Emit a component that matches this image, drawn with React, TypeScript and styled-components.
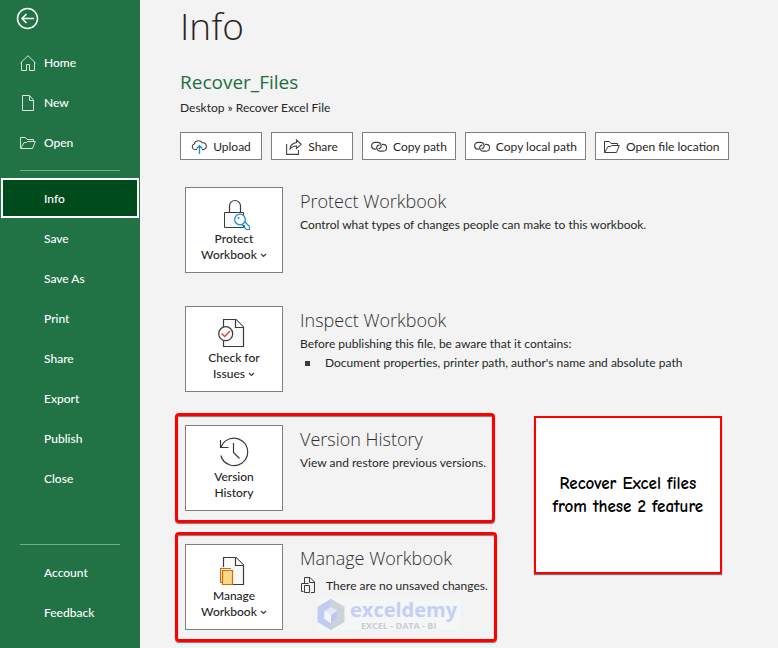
import React from "react";
import styled, { createGlobalStyle, css } from "styled-components";

const Global = createGlobalStyle`
  *, *::before, *::after { box-sizing: border-box; }
  body {
    margin: 0;
    background: #f3f3f3;
    color: #262626;
    font-family: "Segoe UI", Lato, "Noto Sans", sans-serif;
    font-size: 12px;
    line-height: 16px;
  }
  h1, h2, h3, p, ul { margin: 0; padding: 0; font-weight: 400; }
  button { font: inherit; color: inherit; cursor: pointer; }
  svg { display: block; flex: none; fill: none; }
`;

const Page = styled.div`
  display: flex;
  min-height: 100vh;
`;

const Sidebar = styled.nav`
  display: flex;
  flex-direction: column;
  flex: 0 0 140px;
  padding-bottom: 16px;
  background: #217346;
  color: #fff;
`;

const BackButton = styled.button`
  display: block;
  align-self: flex-start;
  margin: 7px 0 12px 16px;
  padding: 0;
  border: 0;
  background: none;
`;

const NavItem = styled.a<{ $active?: boolean }>`
  display: flex;
  align-items: center;
  height: 40px;
  margin: 0 1px;
  padding: 1px 0 0 19px;
  color: #fff;
  font-weight: 500;
  text-decoration: none;
  ${(p) =>
    p.$active &&
    css`
      padding-left: 17px;
      border: 2px solid #fff;
      background: #004b1c;
    `}
`;

const NavIcon = styled.span`
  width: 24px;
`;

const Divider = styled.hr`
  width: 100px;
  height: 1px;
  margin: 8px 20px 7px;
  border: 0;
  background: #6fae8a;
`;

const Spacer = styled.div`
  flex: 1;
`;

const Main = styled.main`
  flex: 1;
  min-width: 0;
  padding: 0 40px 0 35px;
`;

const Header = styled.header`
  padding-left: 5px;
  margin-bottom: 15px;
`;

const Title = styled.h1`
  padding-top: 2px;
  font-family: "Segoe UI Light", "Open Sans", sans-serif;
  font-size: 37px;
  font-weight: 300;
  line-height: 48px;
`;

const FileName = styled.h2`
  margin-top: 19px;
  color: #1e6e42;
  font-family: "Segoe UI", "Open Sans", sans-serif;
  font-size: 19px;
  line-height: 26px;
`;

const FilePath = styled.p`
  margin-top: 5px;
`;

const Toolbar = styled.div`
  display: flex;
  flex-wrap: wrap;
  gap: 9px;
  margin-top: 16px;
`;

const ToolButton = styled.button`
  display: flex;
  align-items: center;
  justify-content: center;
  gap: 6px;
  min-width: 82px;
  height: 28px;
  padding: 1px 8px 0;
  border: 1px solid #7f7f7f;
  background: #fff;
  white-space: nowrap;
`;

const Sections = styled.div`
  display: flex;
  flex-direction: column;
  align-items: flex-start;
  gap: 9px;
`;

const Section = styled.section<{ $marked?: boolean }>`
  display: flex;
  gap: 17px;
  padding: 9px 6px 9px 7px;
  border: 3px solid ${(p) => (p.$marked ? "#fe0000" : "transparent")};
  border-radius: 4px;
  box-shadow: ${(p) => (p.$marked ? "0 1px 1px #777, inset 0 1px 1px #777" : "none")};
`;

const Tile = styled.button`
  display: flex;
  flex: none;
  flex-direction: column;
  align-items: center;
  width: 98px;
  height: 86px;
  padding: 10px 0 0;
  border: 1px solid #7f7f7f;
  background: #fff;
  font-weight: 500;
`;

const TileLabel = styled.span`
  display: flex;
  align-items: center;
  gap: 3px;
`;

const TileIcon = styled.span`
  height: 33px;
`;

const SectionTitle = styled.h3`
  color: #303030;
  font-family: "Segoe UI Light", "Open Sans", sans-serif;
  font-size: 18px;
  font-weight: 300;
  line-height: 28px;
`;

const SectionText = styled.p`
  margin-top: 2px;
`;

const Findings = styled.ul`
  margin-top: 3px;
  list-style: none;
`;

const Finding = styled.li`
  display: flex;
  align-items: center;
  gap: 15px;
  padding-left: 5px;
  &::before {
    content: "";
    width: 5px;
    height: 5px;
    background: #3b3b3b;
  }
`;

const Unsaved = styled.p`
  display: flex;
  align-items: center;
  gap: 10px;
  margin-top: 5px;
  padding-left: 1px;
`;

const Split = styled.div`
  display: flex;
  align-items: flex-start;
  gap: 37px;
  margin-top: 9px;
`;

const Callout = styled.aside`
  display: flex;
  align-items: center;
  justify-content: center;
  flex: 0 1 188px;
  height: 158px;
  margin-top: 3px;
  border: 2px solid #fe0000;
  box-shadow: 0 1px 1px #777;
  background: #fff;
  color: #000;
  font-family: "Comic Sans MS", "Comic Neue", cursive;
  font-size: 17px;
  font-weight: 700;
  line-height: 23px;
  text-align: center;
  white-space: nowrap;
`;

const Brand = styled.div`
  display: flex;
  align-items: center;
  gap: 5px;
  width: 143px;
  height: 31px;
  margin: 5px 0 0 17px;
  background: #f5f6f6;
`;

const BrandText = styled.div`
  color: #c3cff5;
  font-family: "Open Sans", sans-serif;
  font-size: 20px;
  font-weight: 700;
  line-height: 22px;
`;

const BrandTag = styled.small`
  display: block;
  padding-left: 11px;
  color: #c9ccd2;
  font-size: 9px;
  line-height: 9px;
`;

const BackIcon = () => (
  <svg width="23" height="23" stroke="#fff" strokeWidth="1.5">
    <circle cx="11.5" cy="11.5" r="10" />
    <path d="M6 11.500H18M10.500 7L6 11.500L10.500 16" />
  </svg>
);

const HomeIcon = () => (
  <svg width="16" height="16" stroke="#d5e6dc">
    <path d="M.5 8L8 .7L15.500 8M1.500 7V15.500H6.500V9.500H9.500V15.500H14.500V7" />
  </svg>
);

const NewIcon = () => (
  <svg width="16" height="16" stroke="#d5e6dc">
    <path d="M2.500.500H9.500L13.500 5V15.500H2.500ZM9.500.500V5.500H13.500" />
  </svg>
);

const FolderIcon = ({ color = "#3b3b3b" }: { color?: string }) => (
  <svg width="16" height="12" stroke={color}>
    <path d="M.5 11.500V.500H5.500L7 2.500H13.500V4.500M.7 11.500L4 5.500H6.500L7.500 4.500H15.300L12.500 11.500Z" />
  </svg>
);

const UploadIcon = () => (
  <svg width="16" height="14" stroke="#444" strokeWidth="1.1">
    <path d="M6 9.500H3.500A2.800 2.800 0 0 1 3.200 4.100A4.400 4.400 0 0 1 11.200 2.800A3.400 3.400 0 0 1 12.500 9.500H11" />
    <path d="M8.500 14V6M5.700 8.500L8.500 5.700L11.300 8.500" stroke="#1e8bcd" strokeWidth="1.3" />
  </svg>
);

const ShareIcon = () => (
  <svg width="16" height="16" stroke="#444" strokeWidth="1.1">
    <path d="M.6 5V15.400H12.500V11" />
    <path d="M10.500 1L15.200 5.300L10.500 9.500V7C7.500 7 5.500 8 3.800 10.500C4.200 6.500 6.500 4 10.500 3.600Z" />
  </svg>
);

const LinkIcon = () => (
  <svg width="16" height="12" stroke="#444" strokeWidth="1.2">
    <path d="M5 8.200H4A3.400 3.400 0 0 1 4 1.400H7A3.300 3.300 0 0 1 9.600 6.600Q8.800 7.700 7.500 7.600" />
    <path d="M11 3.300H12.200A3.400 3.400 0 0 1 12.200 10.100H8.800A3.200 3.200 0 0 1 6.300 5Q7.200 3.900 8.500 4.100" />
  </svg>
);

const LockIcon = () => (
  <svg width="32" height="32" stroke="#3b3b3b">
    <path d="M11.500 14.500V8A5.500 5.500 0 0 1 22.500 8V14.500" strokeWidth="1.2" />
    <path d="M6.500 14.500H25.500V29.500H6.500Z" fill="#fafafa" />
    <path d="M22 25.500H24.500V27.500H26.500V29.500L28.500 31.500H31.500V28.500L26.500 23.500" stroke="#1e8bcd" fill="#fff" strokeWidth="1.2" />
    <circle cx="22" cy="21.500" r="5.300" stroke="#1e8bcd" fill="#fff" strokeWidth="1.300" />
    <circle cx="20.500" cy="20" r="1" fill="#1e8bcd" stroke="none" />
  </svg>
);

const CheckIcon = () => (
  <svg width="32" height="32" stroke="#3b3b3b" strokeWidth="1.200">
    <path d="M5.500 2.500H18L25.500 10V29.500H5.500Z" fill="#fafafa" />
    <path d="M17.500 2.500V10.500H25.500" fill="#fff" />
    <circle cx="7.700" cy="16.700" r="7" fill="#fff" />
    <path d="M3.500 16.500L6.700 19.500L12 14" stroke="#ee3b33" strokeWidth="1.400" />
  </svg>
);

const HistoryIcon = () => (
  <svg width="30" height="32" stroke="#3b3b3b" strokeWidth="1.200">
    <path d="M1.800 19.500A13.700 13.700 0 1 0 2 11.500" />
    <path d="M1.500 4V11.500H9.500M14.500 7V16.500L20.500 22.500" />
  </svg>
);

const ManageIcon = () => (
  <svg width="28" height="32" stroke="#3b3b3b" strokeWidth="1.200">
    <path d="M3.500 2.500H16L23.500 10V29.500H3.500Z" fill="#fafafa" />
    <path d="M15.500 2.500V10.500H23.500" fill="#fff" />
    <path d="M0 12H12V31H0Z" fill="#fff" stroke="none" />
    <path d="M2.500 27.500H.600V13.500H11" stroke="#d86b00" />
    <path d="M2.500 15.500H12.500V29.500H2.500Z" fill="#f9d98c" stroke="#d86b00" />
  </svg>
);

const CopiesIcon = () => (
  <svg width="15" height="17" stroke="#3b3b3b">
    <path d="M3.500 6V.500H9L13.500 5V15.500H10M8.500.500V5.500H13.500M2.500 14.500H.500V6.500H7.500M3.500 8.500H8.500V15.500H3.500Z" />
  </svg>
);

const Chevron = () => (
  <svg width="7" height="5" stroke="#3b3b3b" strokeWidth="1.200">
    <path d="M1 1L3.500 3.500L6 1" />
  </svg>
);

const BrandMark = () => (
  <svg width="28" height="31" viewBox="0 0 28 31">
    <path d="M14 0L27.500 8L14 16L.5 8Z" fill="#d0d6e6" />
    <path d="M14 0L.5 8V23L14 31V24L7.500 20V12L14 8Z" fill="#c0ccf2" />
    <path d="M14 8L20.500 12V20L14 24V31L27.500 23V8L14 0Z" fill="#cdd1d9" />
    <path d="M14 8L20.500 12L14 16L7.500 12Z" fill="#e3e8f5" />
    <path d="M7.500 12L14 16V24L7.500 20Z" fill="#f4f5f8" />
    <path d="M20.500 12L14 16V24L20.500 20Z" fill="#bcc8ea" />
  </svg>
);

const icons: Record<string, React.ReactNode> = {
  Home: <HomeIcon />,
  New: <NewIcon />,
  Open: <FolderIcon color="#d5e6dc" />,
};

const NavLink = ({ label, active }: { label: string; active?: boolean }) => (
  <NavItem href="#" $active={active} aria-current={active ? "page" : undefined}>
    <NavIcon>{icons[label]}</NavIcon>
    {label}
  </NavItem>
);

type InfoProps = {
  icon: React.ReactNode;
  label: [string, string];
  menu?: boolean;
  marked?: boolean;
  title: string;
  children: React.ReactNode;
};

const InfoSection = ({ icon, label, menu, marked, title, children }: InfoProps) => (
  <Section $marked={marked}>
    <Tile>
      <TileIcon>{icon}</TileIcon>
      <TileLabel>{label[0]}</TileLabel>
      <TileLabel>
        {label[1]}
        {menu && <Chevron />}
      </TileLabel>
    </Tile>
    <div>
      <SectionTitle>{title}</SectionTitle>
      {children}
    </div>
  </Section>
);

export default function App() {
  return (
    <Page>
      <Global />
      <Sidebar>
        <BackButton aria-label="Back"><BackIcon /></BackButton>
        {["Home", "New", "Open"].map((l) => <NavLink key={l} label={l} />)}
        <Divider />
        {["Info", "Save", "Save As", "Print", "Share", "Export", "Publish", "Close"].map((l) => (
          <NavLink key={l} label={l} active={l === "Info"} />
        ))}
        <Spacer />
        <Divider />
        {["Account", "Feedback"].map((l) => <NavLink key={l} label={l} />)}
      </Sidebar>
      <Main>
        <Header>
          <Title>Info</Title>
          <FileName>Recover_Files</FileName>
          <FilePath>Desktop » Recover Excel File</FilePath>
          <Toolbar>
            <ToolButton><UploadIcon />Upload</ToolButton>
            <ToolButton><ShareIcon />Share</ToolButton>
            <ToolButton><LinkIcon />Copy path</ToolButton>
            <ToolButton><LinkIcon />Copy local path</ToolButton>
            <ToolButton><FolderIcon />Open file location</ToolButton>
          </Toolbar>
        </Header>
        <Sections>
          <InfoSection icon={<LockIcon />} label={["Protect", "Workbook"]} menu title="Protect Workbook">
            <SectionText>Control what types of changes people can make to this workbook.</SectionText>
          </InfoSection>
          <InfoSection icon={<CheckIcon />} label={["Check for", "Issues"]} menu title="Inspect Workbook">
            <SectionText>Before publishing this file, be aware that it contains:</SectionText>
            <Findings>
              <Finding>Document properties, printer path, author's name and absolute path</Finding>
            </Findings>
          </InfoSection>
        </Sections>
        <Split>
          <Sections>
            <InfoSection icon={<HistoryIcon />} label={["Version", "History"]} marked title="Version History">
              <SectionText>View and restore previous versions.</SectionText>
            </InfoSection>
            <InfoSection icon={<ManageIcon />} label={["Manage", "Workbook"]} menu marked title="Manage Workbook">
              <Unsaved><CopiesIcon />There are no unsaved changes.</Unsaved>
              <Brand>
                <BrandMark />
                <BrandText>exceldemy<BrandTag>EXCEL - DATA - BI</BrandTag></BrandText>
              </Brand>
            </InfoSection>
          </Sections>
          <Callout>Recover Excel files<br />from these 2 feature</Callout>
        </Split>
      </Main>
    </Page>
  );
}
